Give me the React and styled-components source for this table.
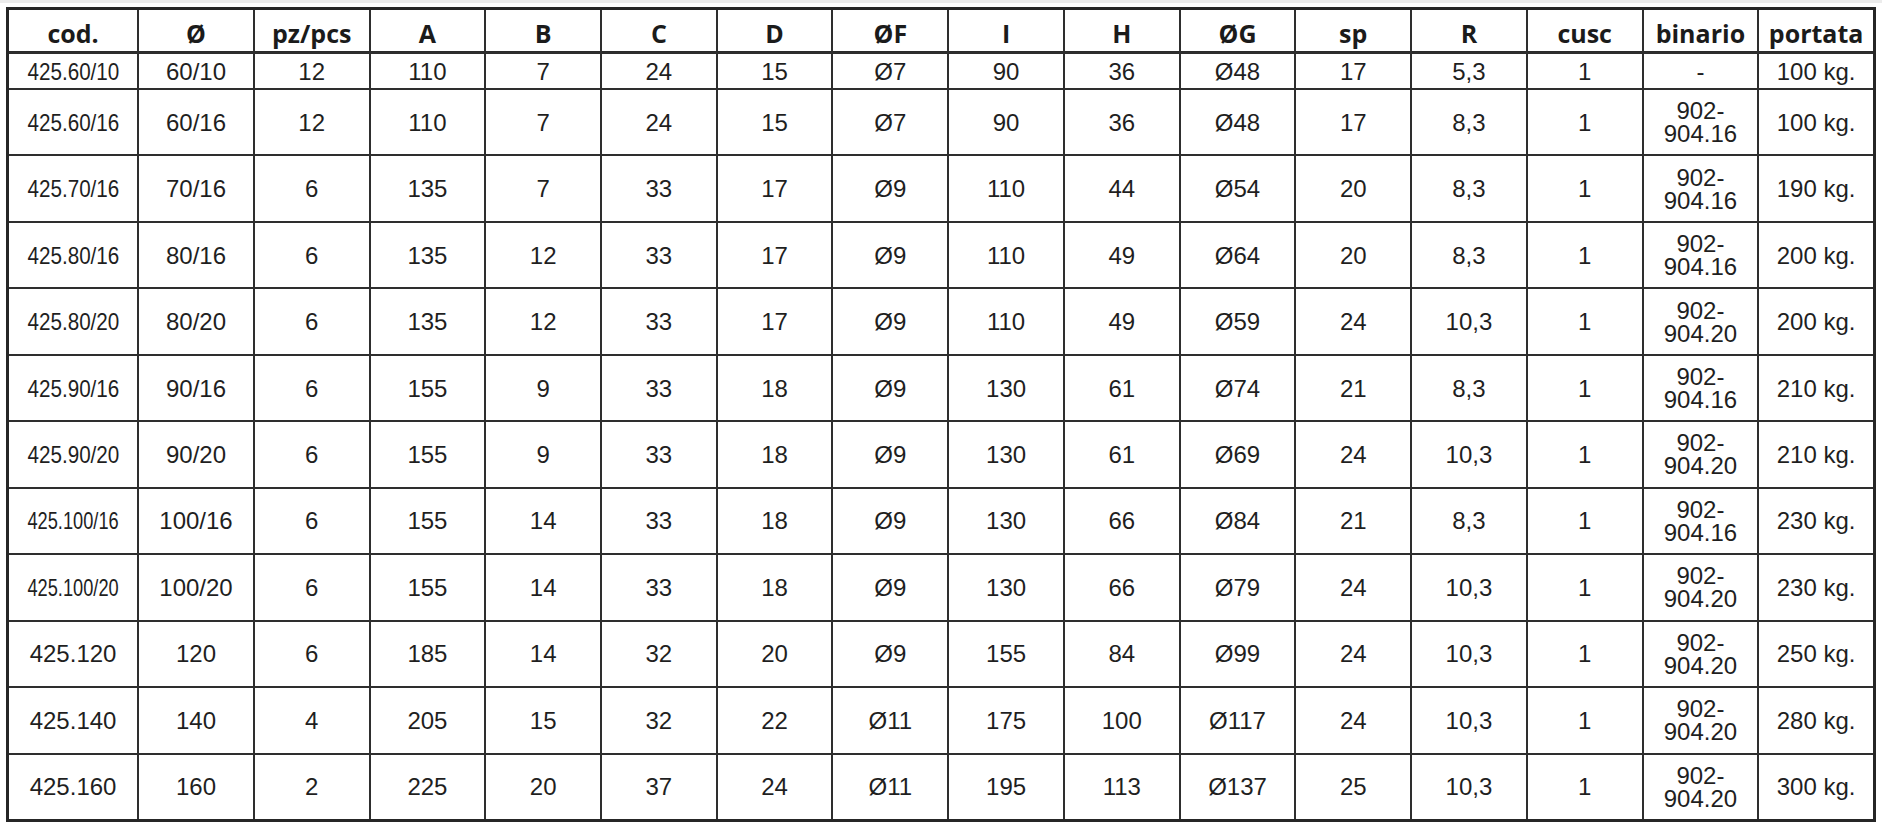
import styled, { createGlobalStyle } from "styled-components";

const GlobalStyle = createGlobalStyle`
    * { box-sizing: border-box; }
    body {
        margin: 0;
        background: #ffffff;
    }
`;

const headers = ["cod.", "Ø", "pz/pcs", "A", "B", "C", "D", "ØF", "I", "H", "ØG", "sp", "R", "cusc", "binario", "portata"];

const rows = [
    ["425.60/10", "60/10", "12", "110", "7", "24", "15", "Ø7", "90", "36", "Ø48", "17", "5,3", "1", "-", "100 kg."],
    ["425.60/16", "60/16", "12", "110", "7", "24", "15", "Ø7", "90", "36", "Ø48", "17", "8,3", "1", "902-904.16", "100 kg."],
    ["425.70/16", "70/16", "6", "135", "7", "33", "17", "Ø9", "110", "44", "Ø54", "20", "8,3", "1", "902-904.16", "190 kg."],
    ["425.80/16", "80/16", "6", "135", "12", "33", "17", "Ø9", "110", "49", "Ø64", "20", "8,3", "1", "902-904.16", "200 kg."],
    ["425.80/20", "80/20", "6", "135", "12", "33", "17", "Ø9", "110", "49", "Ø59", "24", "10,3", "1", "902-904.20", "200 kg."],
    ["425.90/16", "90/16", "6", "155", "9", "33", "18", "Ø9", "130", "61", "Ø74", "21", "8,3", "1", "902-904.16", "210 kg."],
    ["425.90/20", "90/20", "6", "155", "9", "33", "18", "Ø9", "130", "61", "Ø69", "24", "10,3", "1", "902-904.20", "210 kg."],
    ["425.100/16", "100/16", "6", "155", "14", "33", "18", "Ø9", "130", "66", "Ø84", "21", "8,3", "1", "902-904.16", "230 kg."],
    ["425.100/20", "100/20", "6", "155", "14", "33", "18", "Ø9", "130", "66", "Ø79", "24", "10,3", "1", "902-904.20", "230 kg."],
    ["425.120", "120", "6", "185", "14", "32", "20", "Ø9", "155", "84", "Ø99", "24", "10,3", "1", "902-904.20", "250 kg."],
    ["425.140", "140", "4", "205", "15", "32", "22", "Ø11", "175", "100", "Ø117", "24", "10,3", "1", "902-904.20", "280 kg."],
    ["425.160", "160", "2", "225", "20", "37", "24", "Ø11", "195", "113", "Ø137", "25", "10,3", "1", "902-904.20", "300 kg."],
];

// long codes are squeezed to fit the first column, like in the printed catalogue
function squeeze(code) {
    if (code.length >= 10) return 0.76;
    if (code.length === 9) return 0.86;
    return 1;
}

export default function App() {
    return (
        <>
            <GlobalStyle />
            <Page>
                <Grid>
                    {headers.map((h, i) => <HeadCell key={"h" + i}>{h}</HeadCell>)}
                    {rows.map((r, ri) =>
                        r.map((v, ci) =>
                            <Cell key={ri + "-" + ci}>
                                {ci === 0 ? <Code $scale={squeeze(v)}>{v}</Code> : v}
                            </Cell>
                        )
                    )}
                </Grid>
            </Page>
        </>
    );
}

const Page = styled.div`
    width: 1882px;
    height: 827px;
    padding: 7px 6px 0 6px;
    border-top: 3px solid #ececec;
    background: #ffffff;
`;

const Grid = styled.div`
    width: 1870px;
    height: 815px;
    margin-top: -3px;
    display: grid;
    grid-template-columns: repeat(16, 1fr);
    grid-template-rows: 42px 34px repeat(11, 1fr);
    gap: 2px;
    background: #2e2e2e;
    border: 3px solid #262626;
`;

const HeadCell = styled.div`
    background: #ffffff;
    border-bottom: 1px solid #2a2a2a;
    display: flex;
    align-items: center;
    justify-content: center;
    padding-top: 4px;
    font-family: "Open Sans", "Noto Sans", sans-serif;
    font-weight: 700;
    font-size: 25px;
    color: #1b1b1b;
    white-space: nowrap;
`;

const Cell = styled.div`
    background: #ffffff;
    display: flex;
    align-items: center;
    justify-content: center;
    text-align: center;
    padding: 0 4px;
    font-family: "Liberation Sans", Arial, sans-serif;
    font-size: 24px;
    line-height: 23px;
    color: #1f1f1f;
`;

const Code = styled.span`
    display: inline-block;
    white-space: nowrap;
    transform: scaleX(${props => props.$scale});
`;
